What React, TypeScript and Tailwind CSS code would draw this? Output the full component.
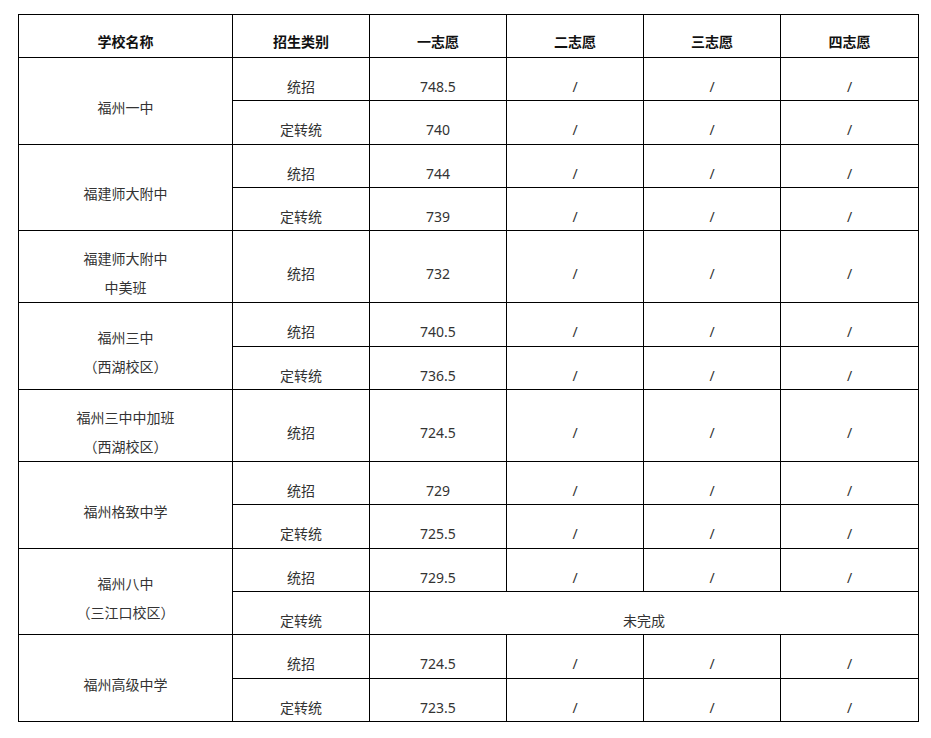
import React from 'react';

type Row = {
  type: string;
  scores: string[] | null;
  h: number;
};

type Group = {
  name: string[];
  rows: Row[];
};

const dash = ['/', '/', '/'];

const groups: Group[] = [
  {
    name: ['福州一中'],
    rows: [
      { type: '统招', scores: ['748.5', ...dash], h: 43 },
      { type: '定转统', scores: ['740', ...dash], h: 44 },
    ],
  },
  {
    name: ['福建师大附中'],
    rows: [
      { type: '统招', scores: ['744', ...dash], h: 43 },
      { type: '定转统', scores: ['739', ...dash], h: 43 },
    ],
  },
  {
    name: ['福建师大附中', '中美班'],
    rows: [{ type: '统招', scores: ['732', ...dash], h: 72 }],
  },
  {
    name: ['福州三中', '（西湖校区）'],
    rows: [
      { type: '统招', scores: ['740.5', ...dash], h: 44 },
      { type: '定转统', scores: ['736.5', ...dash], h: 43 },
    ],
  },
  {
    name: ['福州三中中加班', '（西湖校区）'],
    rows: [{ type: '统招', scores: ['724.5', ...dash], h: 72 }],
  },
  {
    name: ['福州格致中学'],
    rows: [
      { type: '统招', scores: ['729', ...dash], h: 43 },
      { type: '定转统', scores: ['725.5', ...dash], h: 44 },
    ],
  },
  {
    name: ['福州八中', '（三江口校区）'],
    rows: [
      { type: '统招', scores: ['729.5', ...dash], h: 43 },
      { type: '定转统', scores: null, h: 43 },
    ],
  },
  {
    name: ['福州高级中学'],
    rows: [
      { type: '统招', scores: ['724.5', ...dash], h: 44 },
      { type: '定转统', scores: ['723.5', ...dash], h: 43 },
    ],
  },
];

const headers = ['学校名称', '招生类别', '一志愿', '二志愿', '三志愿', '四志愿'];

const cell = 'border border-black text-center align-middle px-1';

export default function App() {
  return (
    <div className="bg-white min-h-[738px] pt-[14px] pl-[18px]" style={{ fontFamily: '"Noto Sans", "Noto Sans CJK SC", sans-serif' }}>
      <table className="table-fixed border-collapse w-[900px] text-[14px] text-[#333]">
        <colgroup>
          <col className="w-[214px]" />
          <col className="w-[137px]" />
          <col className="w-[137px]" />
          <col className="w-[137px]" />
          <col className="w-[137px]" />
          <col className="w-[138px]" />
        </colgroup>
        <thead>
          <tr className="h-[43px]">
            {headers.map((h) => (
              <th key={h} className={`${cell} pt-[11px] font-bold text-[#111]`}>
                {h}
              </th>
            ))}
          </tr>
        </thead>
        <tbody>
          {groups.map((g) =>
            g.rows.map((r, i) => (
              <tr key={g.name.join('') + r.type} style={{ height: r.h }}>
                {i === 0 && (
                  <td rowSpan={g.rows.length} className={`${cell} pt-[12px] pb-0 leading-[29px]`}>
                    {g.name.map((n) => (
                      <div key={n}>{n}</div>
                    ))}
                  </td>
                )}
                <td className={`${cell} pt-[14px]`}>{r.type}</td>
                {r.scores ? (
                  r.scores.map((s, j) => (
                    <td key={j} className={`${cell} pt-[14px]`}>
                      {s}
                    </td>
                  ))
                ) : (
                  <td colSpan={4} className={`${cell} pt-[14px]`}>
                    未完成
                  </td>
                )}
              </tr>
            ))
          )}
        </tbody>
      </table>
    </div>
  );
}
